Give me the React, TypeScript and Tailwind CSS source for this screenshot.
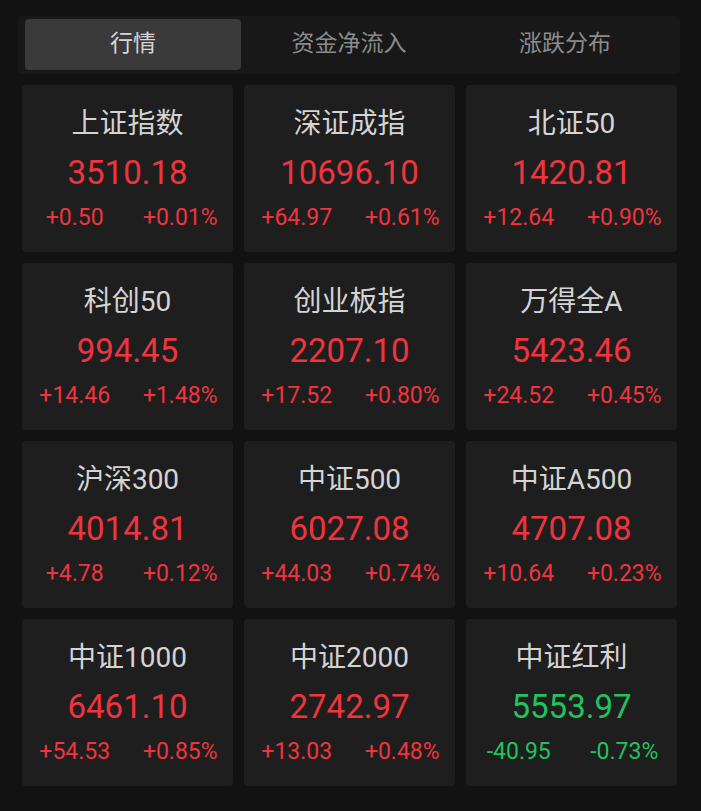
import React from "react";

type Item = { name: string; price: string; chg: string; pct: string; up: boolean };

const items: Item[] = [
  { name: "上证指数", price: "3510.18", chg: "+0.50", pct: "+0.01%", up: true },
  { name: "深证成指", price: "10696.10", chg: "+64.97", pct: "+0.61%", up: true },
  { name: "北证50", price: "1420.81", chg: "+12.64", pct: "+0.90%", up: true },
  { name: "科创50", price: "994.45", chg: "+14.46", pct: "+1.48%", up: true },
  { name: "创业板指", price: "2207.10", chg: "+17.52", pct: "+0.80%", up: true },
  { name: "万得全A", price: "5423.46", chg: "+24.52", pct: "+0.45%", up: true },
  { name: "沪深300", price: "4014.81", chg: "+4.78", pct: "+0.12%", up: true },
  { name: "中证500", price: "6027.08", chg: "+44.03", pct: "+0.74%", up: true },
  { name: "中证A500", price: "4707.08", chg: "+10.64", pct: "+0.23%", up: true },
  { name: "中证1000", price: "6461.10", chg: "+54.53", pct: "+0.85%", up: true },
  { name: "中证2000", price: "2742.97", chg: "+13.03", pct: "+0.48%", up: true },
  { name: "中证红利", price: "5553.97", chg: "-40.95", pct: "-0.73%", up: false },
];

const font = { fontFamily: 'Roboto, "Noto Sans CJK SC", sans-serif' };

function Card({ it }: { it: Item }) {
  const color = it.up ? "text-[#f0343e]" : "text-[#22c35e]";
  return (
    <div className="h-[167px] rounded-[4px] bg-[#1e1e1e] pt-[25px] flex flex-col items-center">
      <div className="text-[28px] leading-[28px] text-[#d4d4d4]">{it.name}</div>
      <div className={`mt-[17px] text-[33px] leading-[36px] font-normal ${color}`}>{it.price}</div>
      <div className={`mt-[14px] grid grid-cols-2 w-full text-[23px] leading-[26px] ${color}`}>
        <div className="text-center">{it.chg}</div>
        <div className="text-center">{it.pct}</div>
      </div>
    </div>
  );
}

export default function App() {
  const tabs = ["行情", "资金净流入", "涨跌分布"];
  return (
    <div className="w-[701px] h-[811px] bg-[#121212] overflow-hidden" style={font}>
      <div className="pt-[16px] pl-[18px] pr-[21px]">
        <div className="h-[58px] rounded-[4px] bg-[#181818] pt-[3px] pb-[4px] px-[7px] grid grid-cols-3">
          {tabs.map((t, i) => (
            <div
              key={t}
              className={`flex items-center justify-center rounded-[4px] text-[23px] ${
                i === 0 ? "bg-[#3a3a3a] text-[#d6d6d6]" : "text-[#8c8c8c]"
              }`}
            >
              {t}
            </div>
          ))}
        </div>
      </div>
      <div className="mt-[11px] pl-[22px] pr-[24px] grid grid-cols-3 gap-[11px]">
        {items.map((it) => (
          <Card key={it.name} it={it} />
        ))}
      </div>
    </div>
  );
}
